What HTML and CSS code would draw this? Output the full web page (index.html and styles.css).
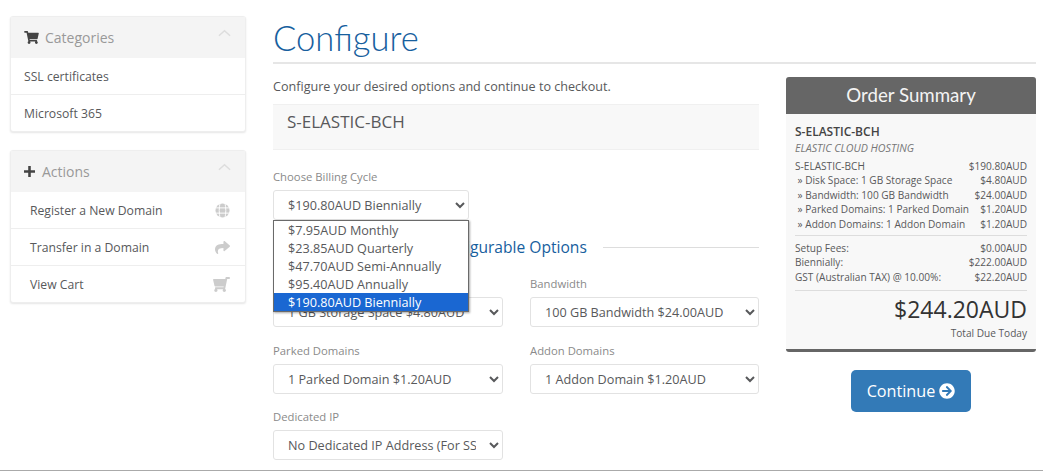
FILE: index.html
```html
<!DOCTYPE html>
<html lang="en">
<head>
<meta charset="utf-8">
<title>Configure</title>
<link rel="stylesheet" href="styles.css">
</head>
<body>
<div class="page">
  <aside class="sidebar">
    <section class="panel">
      <header class="panel-head">
        <svg class="head-icon cart" viewBox="0 0 576 512"><path d="M528.12 301.319l47.273-208C578.806 78.301 567.391 64 551.99 64H159.208l-9.166-44.81C147.758 8.021 137.93 0 126.529 0H24C10.745 0 0 10.745 0 24v16c0 13.255 10.745 24 24 24h69.883l70.248 343.435C147.325 417.1 136 435.222 136 456c0 30.928 25.072 56 56 56s56-25.072 56-56c0-15.674-6.447-29.835-16.824-40h209.647C430.447 426.165 424 440.326 424 456c0 30.928 25.072 56 56 56s56-25.072 56-56c0-22.172-12.888-41.332-31.579-50.405l5.517-24.276c3.413-15.018-8.002-29.319-23.403-29.319H218.117l-6.545-32h293.145c11.206 0 20.92-7.754 23.403-18.681z"/></svg>
        <span class="panel-title">Categories</span>
        <svg class="chev" viewBox="0 0 14 8"><path d="M1 7l6-5.5L13 7"/></svg>
      </header>
      <a class="item">SSL certificates</a>
      <a class="item">Microsoft 365</a>
    </section>
    <section class="panel">
      <header class="panel-head">
        <svg class="head-icon plus" viewBox="0 0 12 12"><path d="M4.6 0h2.8v4.6H12v2.8H7.4V12H4.6V7.4H0V4.6h4.6z"/></svg>
        <span class="panel-title">Actions</span>
        <svg class="chev" viewBox="0 0 14 8"><path d="M1 7l6-5.5L13 7"/></svg>
      </header>
      <a class="item action"><span>Register a New Domain</span>
        <svg class="item-icon globe" viewBox="0 0 16 16"><circle cx="8" cy="8" r="7.5"/><path class="cut" d="M0 5.2h16M0 10.8h16M5.4 0C4.2 5 4.2 11 5.4 16M10.6 0c1.2 5 1.2 11 0 16"/></svg></a>
      <a class="item action"><span>Transfer in a Domain</span>
        <svg class="item-icon share" viewBox="0 0 512 512"><path d="M503.691 189.836L327.687 37.851C312.281 24.546 288 35.347 288 56.015v80.053C127.371 137.907 0 170.1 0 322.326c0 61.441 39.581 122.309 83.333 154.132 13.653 9.931 33.111-2.533 28.077-18.631C66.066 312.814 132.917 274.316 288 272.085V360c0 20.7 24.3 31.453 39.687 18.164l176.004-152c11.071-9.562 11.086-26.753 0-36.328z"/></svg></a>
      <a class="item action"><span>View Cart</span>
        <svg class="item-icon cart-flip" viewBox="0 0 576 512"><path d="M528.12 301.319l47.273-208C578.806 78.301 567.391 64 551.99 64H159.208l-9.166-44.81C147.758 8.021 137.93 0 126.529 0H24C10.745 0 0 10.745 0 24v16c0 13.255 10.745 24 24 24h69.883l70.248 343.435C147.325 417.1 136 435.222 136 456c0 30.928 25.072 56 56 56s56-25.072 56-56c0-15.674-6.447-29.835-16.824-40h209.647C430.447 426.165 424 440.326 424 456c0 30.928 25.072 56 56 56s56-25.072 56-56c0-22.172-12.888-41.332-31.579-50.405l5.517-24.276c3.413-15.018-8.002-29.319-23.403-29.319H218.117l-6.545-32h293.145c11.206 0 20.92-7.754 23.403-18.681z"/></svg></a>
    </section>
  </aside>

  <main class="main">
    <h1 class="page-title">Configure</h1>
    <div class="columns">
      <div class="config">
        <p class="intro">Configure your desired options and continue to checkout.</p>
        <div class="product">S-ELASTIC-BCH</div>

        <div class="billing">
          <label class="field-label">Choose Billing Cycle</label>
          <select class="control billing-select">
            <option>$190.80AUD Biennially</option>
          </select>
          <ul class="dropdown">
            <li>$7.95AUD Monthly</li>
            <li>$23.85AUD Quarterly</li>
            <li>$47.70AUD Semi-Annually</li>
            <li>$95.40AUD Annually</li>
            <li class="selected">$190.80AUD Biennially</li>
          </ul>
        </div>

        <div class="sub-heading"><span class="rule rule-left"></span><span class="sub-text">Configurable Options</span><span class="rule"></span></div>

        <div class="options">
          <div class="field">
            <label class="field-label">Disk Space</label>
            <select class="control"><option>1 GB Storage Space $4.80AUD</option></select>
          </div>
          <div class="field">
            <label class="field-label">Bandwidth</label>
            <select class="control"><option>100 GB Bandwidth $24.00AUD</option></select>
          </div>
          <div class="field">
            <label class="field-label">Parked Domains</label>
            <select class="control"><option>1 Parked Domain $1.20AUD</option></select>
          </div>
          <div class="field">
            <label class="field-label">Addon Domains</label>
            <select class="control"><option>1 Addon Domain $1.20AUD</option></select>
          </div>
          <div class="field">
            <label class="field-label">Dedicated IP</label>
            <select class="control"><option>No Dedicated IP Address (For SSL Certificates)</option></select>
          </div>
        </div>
      </div>

      <div class="side">
        <div class="summary">
          <h2 class="summary-title">Order Summary</h2>
          <div class="summary-body">
            <div class="summary-name">S-ELASTIC-BCH</div>
            <div class="summary-group">ELASTIC CLOUD HOSTING</div>
            <div class="rows">
              <div class="row"><span>S-ELASTIC-BCH</span><span>$190.80AUD</span></div>
              <div class="row"><span>&nbsp;» Disk Space: 1 GB Storage Space</span><span>$4.80AUD</span></div>
              <div class="row"><span>&nbsp;» Bandwidth: 100 GB Bandwidth</span><span>$24.00AUD</span></div>
              <div class="row"><span>&nbsp;» Parked Domains: 1 Parked Domain</span><span>$1.20AUD</span></div>
              <div class="row"><span>&nbsp;» Addon Domains: 1 Addon Domain</span><span>$1.20AUD</span></div>
            </div>
            <div class="rows ruled">
              <div class="row"><span>Setup Fees:</span><span>$0.00AUD</span></div>
              <div class="row"><span>Biennially:</span><span>$222.00AUD</span></div>
              <div class="row"><span>GST (Australian TAX) @ 10.00%:</span><span>$22.20AUD</span></div>
            </div>
            <div class="total ruled">$244.20AUD</div>
            <div class="total-label">Total Due Today</div>
          </div>
        </div>
        <button class="continue" type="button">Continue
          <svg class="continue-icon" viewBox="0 0 512 512"><path d="M256 8c137 0 248 111 248 248S393 504 256 504 8 393 8 256 119 8 256 8zm-28.9 143.6l75.5 72.4H120c-13.3 0-24 10.7-24 24v16c0 13.3 10.7 24 24 24h182.6l-75.5 72.4c-9.7 9.3-9.9 24.8-.4 34.3l11 10.9c9.4 9.4 24.6 9.4 33.9 0L404.3 273c9.4-9.4 9.4-24.6 0-33.9L271.6 106.3c-9.4-9.4-24.6-9.4-33.9 0l-11 10.9c-9.3 9.6-9.1 25.1.4 34.4z"/></svg>
        </button>
      </div>
    </div>
  </main>
</div>
</body>
</html>
```

FILE: styles.css
```css
* { box-sizing: border-box; }
html, body { margin: 0; height: 100%; }
body {
  font-family: "Open Sans", "Liberation Sans", sans-serif;
  font-size: 12px;
  color: #58595b;
  background: #fff;
  overflow: hidden;
}
.page {
  display: flex;
  height: 471px;
  border-bottom: 1px solid #aaa;
  padding: 16px 7px 0 10px;
  gap: 27px;
}
.sidebar { width: 236px; flex: none; display: flex; flex-direction: column; gap: 18px; }
.panel {
  border: 1px solid #eee;
  border-radius: 3px;
  box-shadow: 0 1px 2px rgba(0,0,0,.1);
  background: #fff;
}
.panel-head {
  display: flex;
  align-items: center;
  height: 41px;
  padding: 0 14px 0 13px;
  background: #f4f4f4;
}
.head-icon { fill: #444; flex: none; }
.cart { width: 15px; height: 13px; margin-right: 6px; }
.plus { width: 11px; height: 11px; margin-right: 7px; }
.panel-title { flex: 1; font-size: 14px; color: #999; }
.chev { width: 13px; height: 8px; fill: none; stroke: #ddd; stroke-width: 1.6; margin-top: -10px; }
.item {
  display: flex;
  justify-content: space-between;
  align-items: center;
  height: 37px;
  padding: 0 15px 0 13px;
  border-top: 1px solid #eee;
  font-size: 12.2px;
  color: #58595b;
}
.panel-head + .item { border-top: 0; height: 36px; }
.action { padding-left: 19px; }
.item-icon { flex: none; fill: #ccc; }
.globe { width: 15px; height: 15px; }
.globe .cut { fill: none; stroke: #fff; stroke-width: 1; }
.share { width: 15px; height: 15px; }
.cart-flip { width: 17px; height: 15px; transform: scaleX(-1); }

.main { flex: 1; min-width: 0; }
.page-title {
  margin: 0;
  height: 48px;
  font-family: Lato, "Liberation Sans", sans-serif;
  font-weight: 300;
  font-size: 34.6px;
  line-height: 43px;
  color: #17609e;
  border-bottom: 2px solid #e6e6e6;
}
.columns { display: flex; gap: 27px; }
.config { width: 486px; flex: none; }
.intro { margin: 14px 0 9px; line-height: 17px; font-size: 12.6px; color: #58595b; }
.product {
  height: 46px;
  padding: 6px 14px;
  background: #f8f8f8;
  border-top: 1px solid #f0f0f0;
  border-bottom: 1px solid #f0f0f0;
  font-size: 17px;
  line-height: 22px;
}
.billing { position: relative; margin-top: 19px; }
.field-label { display: block; font-size: 11.3px; line-height: 16px; color: #8a8a8a; margin-bottom: 5px; }
.control {
  display: block;
  width: 100%;
  height: 30px;
  padding: 0 10px;
  font-family: "Open Sans", "Liberation Sans", sans-serif;
  font-size: 12.65px;
  color: #58595b;
  background: #fff;
  border: 1px solid #e2e2e2;
  border-radius: 3px;
}
.billing-select { width: 196px; }
.dropdown {
  position: absolute;
  z-index: 5;
  left: 0;
  top: 51px;
  width: 196px;
  margin: 0;
  padding: 0;
  list-style: none;
  background: #fff;
  border: 1px solid #6a6a6a;
  box-shadow: 1px 1px 2px rgba(0,0,0,.35);
}
.dropdown li { height: 18px; line-height: 18px; padding-left: 14px; font-size: 12.65px; color: #58595b; }
.dropdown .selected { background: #1a67d2; color: #fff; }
.sub-heading { display: flex; align-items: center; margin-top: 17px; height: 20px; gap: 16px; }
.rule { flex: 1; height: 1px; background: #ddd; }
.rule-left { flex: none; width: 143px; }
.sub-text { font-size: 15.6px; color: #17609e; }
.options { display: grid; grid-template-columns: 230px 229px; column-gap: 27px; row-gap: 15.5px; margin-top: 19px; }
.side { flex: 1; min-width: 0; margin-top: 13px; display: flex; flex-direction: column; align-items: center; }
.summary {
  width: 100%;
  border-radius: 3px;
  overflow: hidden;
  background: #f8f8f8;
  border-bottom: 3px solid #666;
}
.summary-title {
  margin: 0;
  height: 37px;
  background: #666;
  color: #f4f4f4;
  text-align: center;
  font-family: Lato, "Liberation Sans", sans-serif;
  font-weight: 400;
  font-size: 18.7px;
  line-height: 37px;
}
.summary-body { padding: 10px 9px 9px; font-size: 10.1px; line-height: 14.4px; }
.summary-name { font-weight: 600; font-size: 12px; line-height: 16px; color: #444; }
.summary-group { font-style: italic; font-size: 10.7px; color: #777; line-height: 16px; }
.rows { margin-top: 3px; }
.row { display: flex; justify-content: space-between; }
.ruled { border-top: 1px solid #ddd; }
.rows.ruled { margin-top: 4px; padding-top: 5px; }
.total { margin-top: 6px; text-align: right; font-size: 23px; line-height: 36px; color: #333; }
.total-label { text-align: right; line-height: 14px; margin-top: -1px; }
.continue {
  margin-top: 18px;
  width: 120px;
  height: 42px;
  border: 0;
  border-radius: 5px;
  background: #337ab7;
  color: #fff;
  font-family: "Open Sans", "Liberation Sans", sans-serif;
  font-size: 16.2px;
  display: flex;
  align-items: center;
  justify-content: center;
  gap: 4px;
  padding: 0;
}
.continue-icon { width: 16px; height: 16px; fill: #fff; }
```
